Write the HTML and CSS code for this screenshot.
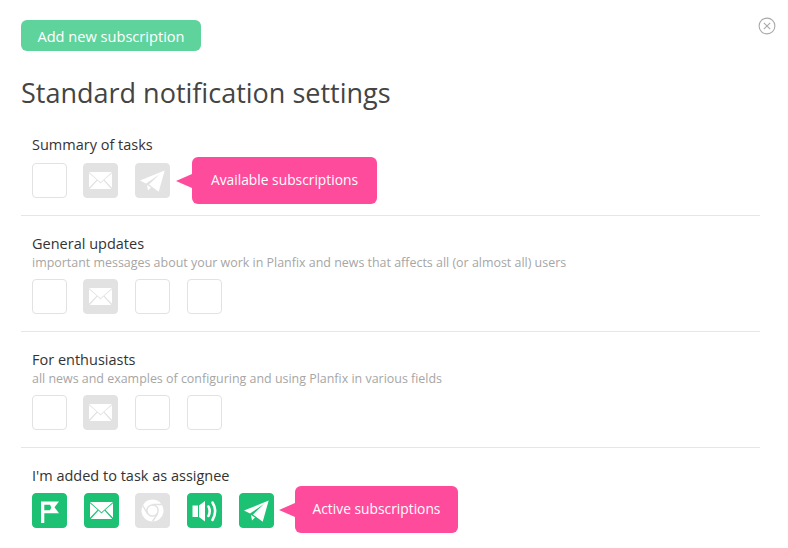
FILE: index.html
```html
<!DOCTYPE html>
<html lang="en">
<head>
<meta charset="utf-8">
<title>Standard notification settings</title>
<link rel="stylesheet" href="styles.css">
</head>
<body>
<svg class="defs" width="0" height="0" aria-hidden="true">
  <symbol id="mail" viewBox="0 0 35 35">
    <path fill="#fff" d="M6 9h23L17.500 19.200zM6 10.200v14.600l7.600-8zM29 10.200v14.600l-7.600-8zM14.500 17.600l3 2.800 3-2.800 7.700 8.400H6.800z"/>
  </symbol>
  <symbol id="plane" viewBox="0 0 35 35">
    <path fill="#fff" d="M29.700 7.500 5 17.500l6 3L25 11 14 21.500l9.700 7.200z"/>
    <path fill="#fff" d="M12 22l1 5.500 3-3z"/>
  </symbol>
  <symbol id="flag" viewBox="0 0 35 35">
    <path fill="#fff" fill-rule="evenodd" d="M9 8.500h18l-4.500 5.800 4.500 6H12.300V30H9zM12.300 11.800v5.500h5.700l1.300-2.900-1.300-2.600z"/>
  </symbol>
  <symbol id="chrome" viewBox="0 0 35 35">
    <circle cx="17.500" cy="17.500" r="11" fill="#fff"/>
    <circle cx="17.500" cy="17.500" r="5.600" fill="none" stroke="#e2e2e2" stroke-width="1.500"/>
    <path d="M17.500 11.500h9.500M12.300 20.500 7.800 12.500M22.700 20.500 17.500 28.500" stroke="#e2e2e2" stroke-width="1.400" fill="none"/>
  </symbol>
  <symbol id="sound" viewBox="0 0 35 35">
    <path fill="#fff" d="M5.500 12.500H11v11.500H5.500zM12 12.500 18 8v20.500l-6-4.500z"/>
    <path fill="none" stroke="#fff" stroke-width="2.600" stroke-linecap="round" d="M21.500 13.500c1.500 3 1.500 6.500 0 9.500M25.500 9.500c3.300 5.500 3.300 12 0 17.500"/>
  </symbol>
</svg>

<main class="page">
  <button class="add-btn" type="button"><span class="add-label">Add new subscription</span></button>
  <button class="close-btn" type="button" aria-label="Close">
    <svg width="18" height="18" viewBox="0 0 18 18"><circle cx="9" cy="9" r="7.900" fill="none" stroke="#a9a9a9" stroke-width="1.100"/><path d="M5.800 5.800l6.400 6.400M12.200 5.800l-6.400 6.400" stroke="#a9a9a9" stroke-width="1.100"/></svg>
  </button>

  <h1 class="title">Standard notification settings</h1>

  <section class="group group-first">
    <h2 class="group-name">Summary of tasks</h2>
    <div class="channels">
      <span class="ch"></span>
      <span class="ch ch-off ch-nudge"><svg class="ico"><use href="#mail"/></svg></span>
      <span class="ch ch-off"><svg class="ico"><use href="#plane"/></svg></span>
      <span class="tip tip-available">Available subscriptions</span>
    </div>
  </section>

  <section class="group">
    <h2 class="group-name">General updates</h2>
    <p class="group-desc">important messages about your work in Planfix and news that affects all (or almost all) users</p>
    <div class="channels">
      <span class="ch"></span>
      <span class="ch ch-off ch-nudge"><svg class="ico"><use href="#mail"/></svg></span>
      <span class="ch"></span>
      <span class="ch"></span>
    </div>
  </section>

  <section class="group">
    <h2 class="group-name">For enthusiasts</h2>
    <p class="group-desc">all news and examples of configuring and using Planfix in various fields</p>
    <div class="channels">
      <span class="ch"></span>
      <span class="ch ch-off ch-nudge"><svg class="ico"><use href="#mail"/></svg></span>
      <span class="ch"></span>
      <span class="ch"></span>
    </div>
  </section>

  <section class="group group-last">
    <h2 class="group-name">I'm added to task as assignee</h2>
    <div class="channels">
      <span class="ch ch-on"><svg class="ico"><use href="#flag"/></svg></span>
      <span class="ch ch-on"><svg class="ico"><use href="#mail"/></svg></span>
      <span class="ch ch-off ch-nudge"><svg class="ico"><use href="#chrome"/></svg></span>
      <span class="ch ch-on"><svg class="ico"><use href="#sound"/></svg></span>
      <span class="ch ch-on"><svg class="ico"><use href="#plane"/></svg></span>
      <span class="tip tip-active">Active subscriptions</span>
    </div>
  </section>
</main>
</body>
</html>
```

FILE: styles.css
```css
* { box-sizing: border-box; }
html, body { margin: 0; padding: 0; background: #fff; }
body {
  width: 788px;
  height: 548px;
  overflow: hidden;
  font-family: "Open Sans", "Noto Sans", sans-serif;
  color: #3f3f3f;
}
.defs { position: absolute; }
.page {
  position: relative;
  padding: 20px 28px 0 21px;
}
.add-btn {
  display: block;
  width: 180px;
  height: 31px;
  padding: 1px 0 0;
  border: 0;
  border-radius: 6px;
  background: #5fd39c;
  color: #fff;
  font: 14.600px/30px "Open Sans", sans-serif;
}
.close-btn {
  position: absolute;
  top: 17px;
  right: 12px;
  width: 18px;
  height: 18px;
  padding: 0;
  border: 0;
  background: none;
}
.close-btn svg { display: block; }
.title {
  margin: 22px 0 0;
  font-size: 27px;
  line-height: 40px;
  font-weight: 400;
  color: #444;
}
.group {
  padding: 0 0 17px 11px;
  border-bottom: 1px solid #e6e6e6;
}
.group-first { margin-top: 22px; }
.group + .group { padding-top: 18px; }
.group-last { border-bottom: 0; }
.group-name {
  margin: 0;
  font-size: 14.500px;
  line-height: 20px;
  font-weight: 400;
  color: #333;
}
.group-desc {
  margin: 0;
  font-size: 12.450px;
  line-height: 18px;
  color: #a6a6a6;
}
.channels {
  position: relative;
  display: flex;
  gap: 17px;
  margin-top: 8px;
}
.group-desc + .channels { margin-top: 7px; }
.group-last .channels { margin-top: 7px; }
.ch {
  flex: none;
  width: 35px;
  height: 35px;
  border: 1px solid #e2e2e2;
  border-radius: 4px;
  background: #fff;
}
.ch-off { background: #e2e2e2; }
.ch-on { background: #1dc173; border-color: #1dc173; }
.ch-nudge { margin-left: -1px; }
.ico { display: block; width: 35px; height: 35px; margin: -1px; }
.tip {
  position: absolute;
  top: -6px;
  height: 47px;
  border-radius: 6px;
  background: #ff4b9b;
  color: #fff;
  font-size: 13.800px;
  line-height: 46px;
  text-align: center;
}
.tip::before {
  content: "";
  position: absolute;
  left: -16px;
  top: 17px;
  border-style: solid;
  border-width: 7px 16px 7px 0;
  border-color: transparent #ff4b9b transparent transparent;
}
.tip-available { left: 160px; width: 185px; }
.tip-active { top: -7px; left: 263px; width: 163px; }
```
